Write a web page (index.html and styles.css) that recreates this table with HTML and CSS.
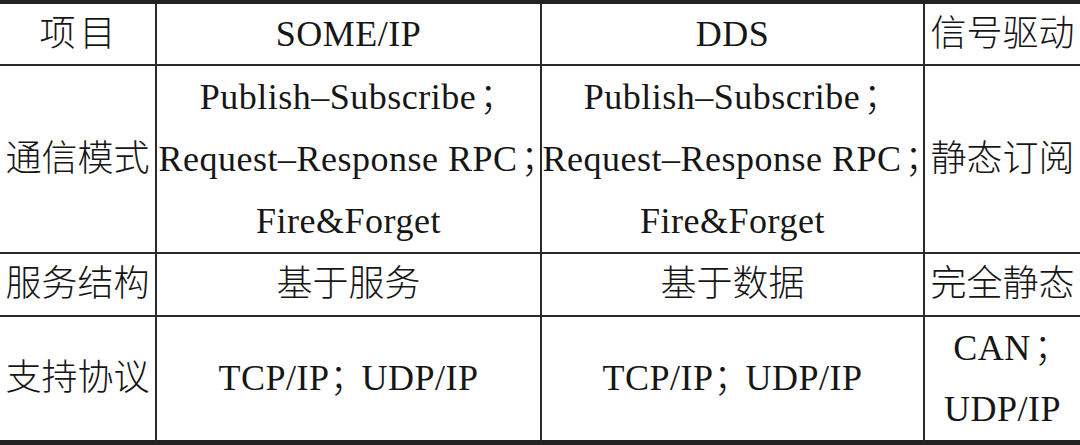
FILE: index.html
```html
<!DOCTYPE html>
<html lang="zh-CN">
<head>
<meta charset="utf-8">
<title>通信模式对比</title>
<link rel="stylesheet" href="styles.css">
</head>
<body>
<table class="cmp">
  <colgroup>
    <col class="c1"><col class="c2"><col class="c3"><col class="c4">
  </colgroup>
  <tr class="r1">
    <td class="first spaced">项目</td>
    <td class="lat">SOME/IP</td>
    <td class="lat">DDS</td>
    <td>信号驱动</td>
  </tr>
  <tr class="r2">
    <td class="first">通信模式</td>
    <td class="lat">Publish–Subscribe<span class="sc">；</span><br>Request–Response RPC<span class="sc">；</span><br>Fire&amp;Forget</td>
    <td class="lat">Publish–Subscribe<span class="sc">；</span><br>Request–Response RPC<span class="sc">；</span><br>Fire&amp;Forget</td>
    <td>静态订阅</td>
  </tr>
  <tr class="r3">
    <td class="first">服务结构</td>
    <td>基于服务</td>
    <td>基于数据</td>
    <td>完全静态</td>
  </tr>
  <tr class="r4">
    <td class="first">支持协议</td>
    <td class="lat">TCP/IP<span class="sc gap">；</span>UDP/IP</td>
    <td class="lat">TCP/IP<span class="sc gap">；</span>UDP/IP</td>
    <td class="lat">CAN<span class="sc">；</span><br>UDP/IP</td>
  </tr>
</table>
</body>
</html>
```

FILE: styles.css
```css
html, body {
  margin: 0;
  padding: 0;
  background: #ffffff;
}

.cmp {
  width: 1080px;
  table-layout: fixed;
  border-collapse: separate;
  border-spacing: 0;
  border-top: 4px solid #232323;
  font-family: "Liberation Serif", "Noto Sans CJK SC", serif;
  font-size: 36px;
  font-weight: 300;
  color: #161616;
}

.c1 { width: 155px; }
.c2 { width: 385px; }
.c3 { width: 383px; }
.c4 { width: 157px; }

.cmp td {
  padding: 0;
  text-align: center;
  vertical-align: middle;
  white-space: nowrap;
  border-left: 2px solid #2a2a2a;
  border-bottom: 2px solid #2a2a2a;
}

.cmp td.first {
  border-left: none;
}

.cmp td.spaced {
  letter-spacing: 4px;
  padding-left: 4px;
}

.cmp td.lat {
  letter-spacing: 0.5px;
}

.sc {
  font-feature-settings: "halt";
  padding-left: 3px;
  letter-spacing: 0;
}

.sc.gap {
  padding-left: 0;
  padding-right: 14px;
}

.r1 td { height: 60px; line-height: 60px; }
.r2 td { height: 186px; line-height: 62px; }
.r3 td { height: 61px; line-height: 61px; }
.r4 td { height: 123px; line-height: 61px; border-bottom: 5px solid #232323; }
```
